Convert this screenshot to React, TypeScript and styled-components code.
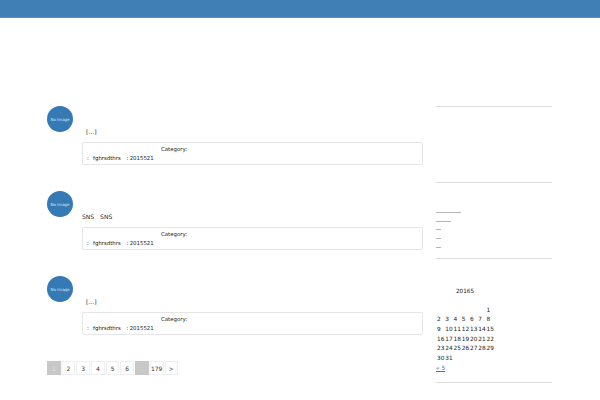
import React from "react";
import styled, { createGlobalStyle } from "styled-components";

const Global = createGlobalStyle`
  html, body { margin: 0; padding: 0; background: #fff; }
  body { font-family: "DejaVu Sans", sans-serif; color: #222; overflow: hidden; }
  * { box-sizing: border-box; }
`;
const Page = styled.div`width: 600px; height: 400px; overflow: hidden;`;
const Header = styled.header`height: 18px; background: #3f7fb6; border-bottom: 1px solid #5d8db5;`;
const Body = styled.div`display: flex; padding: 88px 48px 0 47px; gap: 13px; opacity: 0.999;`;
const Main = styled.main`width: 376px; display: flex; flex-direction: column;`;
const Post = styled.article`display: flex; gap: 9px; height: 85px;`;
const Avatar = styled.div`
  width: 26px; height: 26px; border-radius: 50%; background: #3579b5; color: #dfe9f3;
  font-size: 4px; display: flex; align-items: center; justify-content: center; flex: none; white-space: nowrap;
`;
const PostBody = styled.div`flex: 1; padding-top: 21px;`;
const Excerpt = styled.p<{ $indent: boolean }>`
  margin: 0 0 7px; font-size: 6px; height: 8px; line-height: 9px; padding-left: ${(p) => (p.$indent ? 4 : 0)}px; white-space: pre;
`;
const Meta = styled.div`
  height: 23px; border: 1px solid #e6e6e6; border-radius: 2px; font-size: 5.4px; line-height: 8px;
  display: flex; flex-direction: column; padding: 2px 0 0 4px;
`;
const Category = styled.div`padding-left: 74px;`;
const MetaLine = styled.div`white-space: pre; margin-top: 1px; word-spacing: -0.3px;`;
const Pager = styled.nav`display: flex; gap: 1px;`;
const PageItem = styled.a<{ $muted?: boolean }>`
  width: 13.7px; height: 14px; display: flex; align-items: center; justify-content: center; font-size: 6px;
  background: ${(p) => (p.$muted ? "#c8c8c8" : "#fff")}; outline: 1px solid ${(p) => (p.$muted ? "#c8c8c8" : "#eee")}; outline-offset: -1px;
  color: ${(p) => (p.$muted ? "#ddd" : "#333")};
`;
const Side = styled.aside`width: 116px; display: flex; flex-direction: column;`;
const Rule = styled.hr<{ $after: number }>`margin: 0 0 ${(p) => p.$after}px; border: 0; border-top: 1px solid #dedede; width: 100%;`;
const Gap = styled.div<{ $h: number }>`height: ${(p) => p.$h}px;`;
const Links = styled.ul`list-style: none; margin: 0 0 10px; padding: 0; display: flex; flex-direction: column; gap: 7.7px;`;
const LinkItem = styled.li<{ $w: number }>`height: 1px; width: ${(p) => p.$w}px; background: #b5b5b5;`;
const CalTitle = styled.div`font-size: 5.7px; line-height: 9px; padding-left: 20px; margin-bottom: 10px;`;
const Cal = styled.div`display: grid; grid-template-columns: repeat(7, 8.25px); grid-auto-rows: 9.6px; font-size: 5.8px; line-height: 9.6px; padding-left: 1px; margin-bottom: 1px;`;
const Cell = styled.span<{ $start?: number }>`${(p) => (p.$start ? `grid-column-start: ${p.$start};` : "")}`;
const Prev = styled.a`display: block; font-size: 5.8px; line-height: 8px; color: #3a78b5; text-decoration: underline; margin-bottom: 10px;`;

const posts = ["[…]", "SNS　SNS", "[…]"];
const pages = ["1", "2", "3", "4", "5", "6", "…", "179", ">"];
const days = Array.from({ length: 31 }, (_, i) => i + 1);

export default function App() {
  return (
    <Page>
      <Global />
      <Header />
      <Body>
        <Main>
          {posts.map((t, i) => (
            <Post key={i}>
              <Avatar>No image</Avatar>
              <PostBody>
                <Excerpt $indent={t !== "SNS　SNS"}>{t}</Excerpt>
                <Meta>
                  <Category>Category:</Category>
                  <MetaLine>{":   fghrsdthrs    : 2015521"}</MetaLine>
                </Meta>
              </PostBody>
            </Post>
          ))}
          <Pager>
            {pages.map((p, i) => (
              <PageItem key={i} $muted={p === "1" || p === "…"}>{p}</PageItem>
            ))}
          </Pager>
        </Main>
        <Side>
          <Rule $after={0} />
          <Gap $h={75} />
          <Rule $after={29} />
          <Links>
            {[25, 15, 5, 5, 5].map((w, i) => <LinkItem key={i} $w={w} />)}
          </Links>
          <Rule $after={28} />
          <CalTitle>20165</CalTitle>
          <Cal>
            {days.map((d) => <Cell key={d} $start={d === 1 ? 7 : undefined}>{d}</Cell>)}
          </Cal>
          <Prev>« 5</Prev>
          <Rule $after={0} />
        </Side>
      </Body>
    </Page>
  );
}
